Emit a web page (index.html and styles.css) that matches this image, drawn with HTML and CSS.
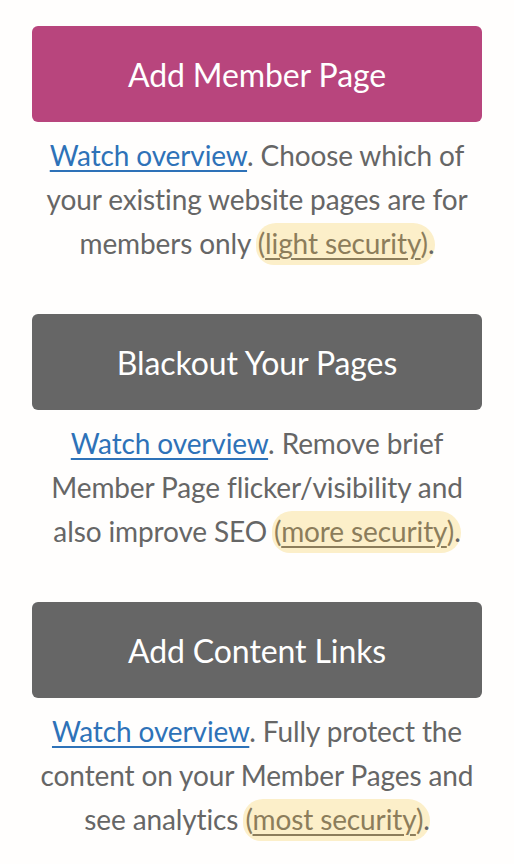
FILE: index.html
```html
<!DOCTYPE html>
<html>
<head>
<meta charset="utf-8">
<link rel="stylesheet" href="styles.css">
</head>
<body>
<main class="page">
  <section class="block">
    <a class="btn btn-pink" href="#">Add Member Page</a>
    <p class="desc"><a class="watch" href="#">Watch overview</a>. Choose which of your existing website pages are for members only <span class="mark">(<a class="sec" href="#">light security</a>)</span>.</p>
  </section>
  <section class="block">
    <a class="btn btn-grey" href="#">Blackout Your Pages</a>
    <p class="desc"><a class="watch" href="#">Watch overview</a>. Remove brief Member Page flicker/visibility and also improve SEO <span class="mark">(<a class="sec" href="#">more security</a>)</span>.</p>
  </section>
  <section class="block">
    <a class="btn btn-grey" href="#">Add Content Links</a>
    <p class="desc"><a class="watch" href="#">Watch overview</a>. Fully protect the content on your Member Pages and see analytics <span class="mark">(<a class="sec" href="#">most security</a>)</span>.</p>
  </section>
</main>
</body>
</html>
```
FILE: styles.css
```css
html, body {
  margin: 0;
  padding: 0;
  background: #fffefd;
}
body {
  font-family: Lato, "Open Sans", sans-serif;
}
.page {
  padding: 26px 32px 0;
  width: 450px;
  display: flex;
  flex-direction: column;
  gap: 49px;
}
.block {
  display: flex;
  flex-direction: column;
}
.btn {
  display: flex;
  align-items: center;
  justify-content: center;
  height: 96px;
  border-radius: 6px;
  color: #ffffff;
  font-size: 32px;
  letter-spacing: -0.1px;
  text-decoration: none;
}
.btn-pink {
  background: #b8457d;
}
.btn-grey {
  background: #666666;
}
.desc {
  margin: 11px 0 0;
  font-size: 28px;
  line-height: 44px;
  letter-spacing: -0.12px;
  color: #666666;
  text-align: center;
}
.watch {
  color: #2e72b8;
  text-decoration: underline;
  text-decoration-thickness: 2px;
  text-underline-offset: 4px;
}
.mark {
  background: #fcefc9;
  color: #8c7d5b;
  border-radius: 20px 22px 20px 18px;
  padding: 3px 7px 5px 2px;
  margin: 0 -7px 0 -2px;
}
.sec {
  color: #8c7d5b;
  text-decoration: underline;
  text-decoration-thickness: 2px;
  text-underline-offset: 4px;
}
```
